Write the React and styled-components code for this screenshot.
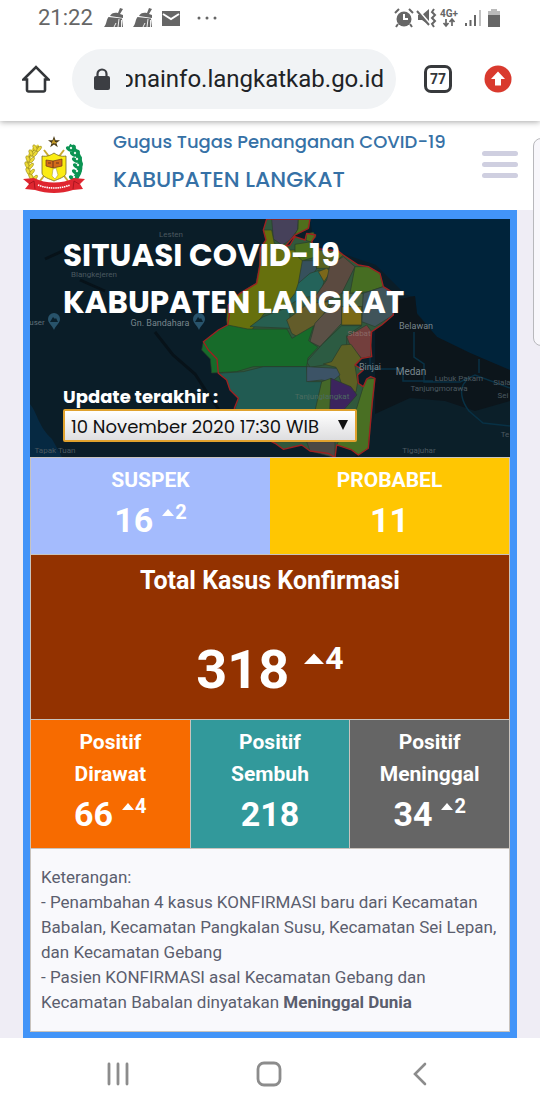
import React from "react";
import styled, { createGlobalStyle } from "styled-components";

const GlobalStyle = createGlobalStyle`
  * { box-sizing: border-box; }
  body { margin: 0; background: #fff; font-family: Roboto, "Liberation Sans", sans-serif; }
  h1, h2, p { margin: 0; }
  button { border: 0; padding: 0; background: none; font: inherit; color: inherit; }
  svg { display: block; }
`;

const display = `Poppins, Inter, "Open Sans", sans-serif`;

const Screen = styled.div`
  display: flex;
  flex-direction: column;
  min-height: 100vh;
  overflow: hidden;
`;

const StatusBar = styled.div`
  position: relative;
  z-index: 3;
  display: flex;
  justify-content: space-between;
  align-items: center;
  height: 36px;
  padding: 0 37px 0 38px;
  background: #fff;
  color: #666;
`;

const StatusGroup = styled.div`
  display: flex;
  align-items: center;
  gap: ${(p) => p.$gap}px;
`;

const Clock = styled.time`
  font-size: 22px;
  line-height: 36px;
  margin-right: 2px;
`;

const BrowserBar = styled.div`
  position: relative;
  z-index: 2;
  display: flex;
  align-items: center;
  height: 85px;
  padding: 0 28px 0 22px;
  box-shadow: 0 1px 6px rgba(0, 0, 0, 0.35);
  background: #fff;
  color: #333639;
`;

const AddressBox = styled.label`
  display: flex;
  align-items: center;
  flex: 1;
  min-width: 0;
  height: 60px;
  margin: 0 28px 0 22px;
  padding: 0 12px 0 21px;
  gap: 15px;
  border-radius: 30px;
  background: #f1f3f5;
`;

const Address = styled.input`
  flex: 1;
  min-width: 0;
  height: 40px;
  border: 0;
  padding: 0;
  background: none;
  outline: none;
  direction: rtl;
  font: 24px Roboto, sans-serif;
  color: #202225;
`;

const TabCount = styled.button`
  width: 28px;
  height: 28px;
  margin-right: 32px;
  border: 3px solid #37393c;
  border-radius: 7px;
  font-size: 14px;
  font-weight: 700;
  line-height: 22px;
`;

const Header = styled.header`
  display: flex;
  align-items: center;
  height: 89px;
  padding: 0 22px 2px;
  color: #3671a6;
  font-family: ${display};
`;

const Brand = styled.div`
  flex: 1;
  margin-left: 27px;
  padding-bottom: 8px;
  font-weight: 500;
  white-space: nowrap;
`;

const Agency = styled.p`
  font-size: 18px;
  line-height: 38px;
`;

const Region = styled.p`
  font-size: 22px;
  line-height: 38px;
`;

const MenuButton = styled.button`
  display: grid;
  gap: 6px;
  width: 36px;
`;

const MenuLine = styled.span`
  height: 5px;
  border-radius: 3px;
  background: #cfcfe0;
`;

const Main = styled.main`
  position: relative;
  flex: 1;
  padding: 0 23px;
  background: #efedf5;
`;

const SideTab = styled.aside`
  position: absolute;
  z-index: 1;
  top: -72px;
  right: -12px;
  width: 19px;
  height: 208px;
  border: 1px solid #b8b8bc;
  border-radius: 8px;
  background: #f8f7fb;
`;

const Frame = styled.section`
  padding: 9px 7px 6px;
  background: #4294f8;
`;

const Hero = styled.div`
  position: relative;
  padding: 13px 33px 15px;
  overflow: hidden;
  background: #0b1f2b;
  color: #fff;
  font-family: ${display};
`;

const MapArt = styled.svg`
  position: absolute;
  inset: 0;
  width: 100%;
  height: 100%;
`;

const HeroBody = styled.div`
  position: relative;
`;

const Title = styled.h1`
  font-size: 31px;
  font-weight: 700;
  line-height: 47px;
  white-space: nowrap;
`;

const UpdateLabel = styled.label`
  display: block;
  margin-top: 59px;
  font-size: 18px;
  font-weight: 700;
  line-height: 24px;
`;

const SelectWrap = styled.div`
  position: relative;
  width: 294px;
  max-width: 100%;
`;

const DateSelect = styled.select`
  display: block;
  width: 100%;
  height: 33px;
  padding: 2px 6px 0;
  appearance: none;
  border: 2px solid #e0a22e;
  border-radius: 2px;
  background: linear-gradient(#fff, #dedee0);
  color: #111;
  font: 18px ${display};
`;

const SelectArrow = styled.svg`
  position: absolute;
  right: 9px;
  top: 11px;
  pointer-events: none;
`;

const Board = styled.div`
  display: grid;
  gap: 1px;
  padding: 1px;
  background: #c9c3bd;
`;

const Row = styled.div`
  display: grid;
  grid-template-columns: repeat(${(p) => p.$columns}, 1fr);
  gap: ${(p) => p.$gap || 0}px;
`;

const Cell = styled.div`
  padding: ${(p) => (p.$large ? 8 : 6)}px 4px ${(p) => (p.$large ? 9 : 10)}px;
  background: ${(p) => p.$color};
  color: #fff;
  text-align: center;
  font-weight: 700;
`;

const CellLabel = styled.h2`
  font-size: ${(p) => (p.$large ? 25 : 21)}px;
  font-weight: 700;
  line-height: ${(p) => (p.$large ? 36 : 32)}px;
`;

const Figure = styled.div`
  display: flex;
  justify-content: center;
  gap: ${(p) => (p.$large ? 15 : 9)}px;
  margin-top: ${(p) => (p.$large ? 31 : 0)}px;
  font-size: ${(p) => (p.$large ? 54 : 34)}px;
  line-height: ${(p) => (p.$large ? 80 : 48)}px;
`;

const Rise = styled.sup`
  display: flex;
  align-items: center;
  gap: 1px;
  height: ${(p) => (p.$large ? 56 : 32)}px;
  font-size: ${(p) => (p.$large ? 32 : 20)}px;
`;

const Notes = styled.div`
  padding: 16px 9px 16px 10px;
  background: #f9f9fc;
  color: #5b5e6e;
  font-size: 17px;
  line-height: 25px;
`;

const SystemNav = styled.nav`
  display: flex;
  justify-content: space-between;
  align-items: center;
  height: 72px;
  padding: 0 108px 0 106px;
  color: #8c8c8c;
`;

function Broom() {
  return (
    <svg width="20" height="20" viewBox="0 0 20 20" fill="currentColor">
      <path d="M16 0l3 1-3 5 3 1v3L6 8c1-3 5-4 8-3z" />
      <path d="M4.500 9l13.500 1.500 1 8.500h-19c3-3 2-7 4.500-10z" />
      <path d="M15 11l-1 8M17.500 12v7M12 15l-2 4" stroke="#fff" strokeWidth=".9" />
    </svg>
  );
}

function StatusIcons() {
  return (
    <svg width="109" height="20" viewBox="0 0 109 20" fill="currentColor">
      <circle cx="10" cy="11" r="7.500" />
      <path d="M1 5l4-4M15 1l4 4M4 16l-2 3M16 16l2 3" stroke="currentColor" strokeWidth="2" />
      <path d="M10 6v5h4" stroke="#fff" strokeWidth="2" fill="none" />
      <path d="M24 7h4l7-6v16l-7-5h-4z" />
      <path d="M24 2l13 15" stroke="#fff" strokeWidth="2" />
      <path d="M23 3l12 14" stroke="currentColor" strokeWidth="2" />
      <path d="M40 1l-2 3 3 3-3 3 3 3-3 3 2 3" fill="none" stroke="currentColor" strokeWidth="2" />
      <text x="46" y="9" fontSize="10" fontWeight="700" fontFamily="Roboto">4G+</text>
      <path d="M52 11v6M49.500 15l2.500 3 2.500-3M58 18v-6M55.500 14l2.500-3 2.500 3" fill="none" stroke="currentColor" strokeWidth="1.700" />
      <path d="M71 15h2v3h-2zM75.500 12h2v6h-2zM80 7h2v11h-2z" />
      <path d="M85 2h2v16h-2z" opacity=".4" />
      <path d="M97 1h6v2h3v5H94V3h3z" opacity=".45" />
      <path d="M94 7h12v12H94z" />
    </svg>
  );
}

const wheat = [[15, 12], [11, 17], [8, 23], [7, 29], [8, 35], [11, 41]];
const cotton = [[48, 12], [52, 17], [54, 23], [55, 29], [54, 35], [51, 41]];

function Crest() {
  return (
    <svg width="64" height="58" viewBox="0 0 64 58" role="img" aria-label="Kabupaten Langkat">
      <path d="M32 0l1.500 4.200h4.500l-3.600 2.700 1.400 4.300-3.800-2.600-3.800 2.600 1.400-4.300L26 4.200h4.500z" fill="#4a3b16" />
      <path d="M32 3l1 3h2l-2 2-1-1-2 1v-2z" fill="#c59b29" />
      <path d="M17 10C3 18 3 36 13 45" fill="none" stroke="#e8d83a" strokeWidth="4" />
      <path d="M17 10C3 18 3 36 13 45" fill="none" stroke="#8c7e1e" strokeWidth=".8" />
      {wheat.map(([x, y]) => (
        <g key={y} fill="#edda35" stroke="#8c7e1e" strokeWidth=".5">
          <ellipse cx={x - 2} cy={y} rx="1.700" ry="3.500" transform={`rotate(-25 ${x - 2} ${y})`} />
          <ellipse cx={x + 2} cy={y + 1} rx="1.500" ry="3.500" transform={`rotate(40 ${x + 2} ${y + 1})`} />
        </g>
      ))}
      <path d="M47 10c14 8 14 26 4 35" fill="none" stroke="#0b9453" strokeWidth="5" />
      {cotton.map(([x, y]) => (
        <g key={y} fill="#0b9453">
          <ellipse cx={x + 3} cy={y} rx="2.500" ry="3.500" transform={`rotate(30 ${x + 3} ${y})`} />
          <ellipse cx={x - 1} cy={y + 1} rx="2" ry="3.500" transform={`rotate(-50 ${x - 1} ${y + 1})`} />
          <circle cx={x + 1} cy={y} r="1.200" fill="#e5f4ea" />
        </g>
      ))}
      <path d="M22 14l24 31M42 14L18 45" stroke="#c9ab31" strokeWidth="2" />
      <path d="M20 20c5 1 9-1 12-3 3 2 7 4 12 3v17c0 4-8 6-12 8-4-2-12-4-12-8z" fill="#fbec12" stroke="#756822" strokeWidth=".8" />
      <path d="M24 24l7 1 9-2v7l-9 2-7-2z" fill="#d36b19" stroke="#6c351c" strokeWidth=".7" />
      <path d="M31 25v7M26 27h3M34 27h3" stroke="#6c351c" />
      <path d="M31 33l3-1 2 7-3 4-3-3z" fill="#fff" stroke="#9a8d32" strokeWidth=".5" />
      <path d="M1 43l11-1c12 6 28 6 40 0l11 1-5 5 3 5-10 1c-12 4-26 4-38 0L3 53l4-5z" fill="#df2630" />
      <path d="M7 48l5-3 1 8M57 48l-5-3-1 8" fill="none" stroke="#9d111c" strokeWidth=".8" />
      <path d="M16 49c10 4 22 4 32 0" fill="none" stroke="#fff" strokeWidth="1.600" strokeDasharray="1.500 .7" />
    </svg>
  );
}

const border =
  "M215 12L205 45 213 75 196 100 195 150 185 205 135 235 100 270 103 300 98 330 70 345 25 380 40 405 66 432 70 475 95 495 105 525 130 550 118 580 150 640 240 685 265 703 320 690 345 708 400 715 420 728 425 690 470 705 490 720 520 700 532 560 540 490 527 485 515 492 505 515 490 505 488 480 505 465 480 450 500 430 530 425 527 390 530 350 560 330 595 300 598 235 565 215 555 175 520 155 490 150 445 120 430 108 360 100 350 80 362 60 335 55 330 75 300 65 285 90 270 95 300 60 340 40 345 12z";

const districts = [
  ["M230 12L310 12 308 45 285 75 262 90 235 72z", "#46415a"],
  ["M310 12h35l-3 28-45 22 12-20z", "#4f6f1c"],
  ["M335 56l20-4 8 14-15 15-15-5z", "#4f6f1c"],
  ["M205 45h25l8 40 35 20h50l8 40-8 60-15 20-20 40-80 30-45 60-65-10-3-30 3-45 35-35 50-30 10-55 2-50 17-25z", "#66700d"],
  ["M300 88l50-8 12 25 40 10-80 22-22-20z", "#4b701d"],
  ["M322 137h38l5 25-30 38-25 5z", "#36505c"],
  ["M310 205l35-30 30-10 15 25-15 50-60 10-75 50 40-40 20-25z", "#24635a"],
  ["M360 105l70 3 15 12-45 40-35 0z", "#58631f"],
  ["M370 170l25-10 12 10-20 30z", "#7b671a"],
  ["M405 150l40-25 35 30-40 80-60 30-20-20 35-50z", "#5b4a40"],
  ["M480 155l40 0 35 20 10 40-45 15-55 5z", "#466d22"],
  ["M440 235l65 0 0 40-65 0z", "#4a6440"],
  ["M505 235l60-20 33 20-3 65-55 35-40-15z", "#40545a"],
  ["M165 335l40-30 80-30 0 65z", "#275f50"],
  ["M275 315l65-50 65-5-30 60-60 50-25-15z", "#635c2a"],
  ["M345 380l15-55 60-65 20 15 0 50-65 70z", "#5b5046"],
  ["M440 275h60v55h-60z", "#7a6917"],
  ["M335 440l45-50 60-58h60l-45 30 0 25-50 60-60 10z", "#2c5b42"],
  ["M25 380L70 345 98 330l60 12h118l15 28 65-38-15 45 28 20-30 32-4 26-100 0-60 0-50 15-75 4-4-42-26-27z", "#176b2a"],
  ["M455 365l60-35 15 20-3 75-27 5-32-32z", "#733f3d"],
  ["M385 447l25-7 30-50 28-2 32 44-20 20 8 50-5 30-40-15-20-60z", "#5c6024"],
  ["M70 475l75-5 60-15h130l5 45h40l-20 180-220 0-20-100 10-30-25-25-10-30z", "#215b52"],
  ["M335 455l90 5 10 20-25 20-30-5-45 5z", "#3c5366"],
  ["M380 500l28-10 0 90 20 40-80 20z", "#456829"],
  ["M408 490l60 25 18 25-40 45h-42z", "#3c245e"],
  ["M505 515l10-23 25-2-20 210-30 20-20-15-45-15 60-110z", "#496f23"],
  ["M335 680h85v48l-75-20z", "#4c4944"],
];

const places = [
  [141, 18, 8, "Lesten"],
  [64, 58, 8, "Blangkejeren"],
  [130, 107, 9, "Gn. Bandahara"],
  [386, 110, 9, "Belawan"],
  [340, 151, 9, "Binjai"],
  [381, 156, 10, "Medan"],
  [429, 162, 8, "Lubuk Pakam"],
  [409, 172, 8, "Tanjungmorawa"],
  [472, 166, 8, "Siala"],
  [473, 179, 8, "Sei"],
  [475, 218, 8, "Te"],
  [389, 234, 8, "Tigajuhar"],
  [25, 234, 8, "Tapak Tuan"],
];

function RegionMap() {
  return (
    <MapArt viewBox="0 0 480 238" preserveAspectRatio="xMidYMid slice" aria-hidden="true">
      <path d="M0 0h480v238H0z" fill="#0a1d28" />
      <path d="M280 0h200v152l-40-18-33-16-20-24-2-16-9-2-30-30-62-21z" fill="#00233a" />
      <path d="M385 77l2 18 20 23 33 16 40 17v87H325l20-30V110l25-30z" fill="#0c151b" />
      <path d="M345 195l35-16 35 3 30 10 35-10v56H328z" fill="#0b1f29" />
      <path d="M0 185c8 10 8 22 22 35l10 18H0z" fill="#062942" />
      <path d="M125 113l18 23 22 19 13 20 14 20M15 40l22-10 20 3M50 61l25 11" fill="none" stroke="#071219" strokeWidth="3" />
      <path d="M384 113v25l10 7v18h36l15-7 35 13M340 124v26h33v12h30M436 162c-8 8-4 21 3 30l14 12 27 3M449 154v-14" fill="none" stroke="#083145" strokeWidth="1.500" />
      <g transform="translate(165 -4) scale(.3333)">
        <path d={border} fill="#31583c" />
        {districts.map(([d, fill]) => (
          <path key={d} d={d} fill={fill} stroke="#283b2b" strokeWidth="2" />
        ))}
        <path d={border} fill="none" stroke="#9f2021" strokeWidth="4" strokeLinejoin="round" />
      </g>
      {[24, 169].map((x) => (
        <g key={x} transform={`translate(${x} 101)`}>
          <path d="M0-7a6 6 0 0 0-6 6c0 4 4 6 6 11 2-5 6-7 6-11a6 6 0 0 0-6-6z" fill="#28536b" />
          <path d="M-4 2l3-5 2 2 1-1 2 4z" fill="#0a202c" />
        </g>
      ))}
      <g fontFamily="Roboto, sans-serif">
        {places.map(([x, y, size, name]) => (
          <text key={name} x={x} y={y} textAnchor="middle" fontSize={size} fill={size > 8 ? "#78868d" : "#4b5960"}>
            {name}
          </text>
        ))}
        <text x="7" y="106" textAnchor="middle" fontSize="8" fill="#607078">user</text>
        <text x="329" y="117" textAnchor="middle" fontSize="8" fill="#8a6865">Stabat</text>
        <text x="292" y="180" textAnchor="middle" fontSize="8" fill="#4c6b60">Tanjunglangkat</text>
      </g>
    </MapArt>
  );
}

function Stat({ label, value, rise, color, large }) {
  return (
    <Cell $color={color} $large={large}>
      {label.map((line) => (
        <CellLabel key={line} $large={large}>{line}</CellLabel>
      ))}
      <Figure $large={large}>
        <span>{value}</span>
        {rise && (
          <Rise $large={large}>
            <svg width={large ? 20 : 12} height={large ? 12 : 8} viewBox="0 0 12 8" fill="currentColor" preserveAspectRatio="none">
              <path d="M0 8L6 1l6 7z" />
            </svg>
            {rise}
          </Rise>
        )}
      </Figure>
    </Cell>
  );
}

export default function App() {
  return (
    <Screen>
      <GlobalStyle />
      <StatusBar>
        <StatusGroup $gap={9}>
          <Clock>21:22</Clock>
          <Broom />
          <Broom />
          <svg width="18" height="15" viewBox="0 0 18 15">
            <path d="M0 0h18v15H0z" fill="currentColor" />
            <path d="M1 3l8 5 8-5" fill="none" stroke="#fff" strokeWidth="2" />
          </svg>
          <svg width="36" height="4" viewBox="0 0 36 4" fill="currentColor">
            <circle cx="10" cy="2" r="1.500" />
            <circle cx="18" cy="2" r="1.500" />
            <circle cx="26" cy="2" r="1.500" />
          </svg>
        </StatusGroup>
        <StatusIcons />
      </StatusBar>

      <BrowserBar>
        <button aria-label="Home">
          <svg width="28" height="28" viewBox="0 0 28 28" fill="none" stroke="currentColor" strokeWidth="2.600">
            <path d="M1.500 14.500L14 2l12.500 12.500H23V25a1.500 1.500 0 0 1-1.500 1.500h-15A1.500 1.500 0 0 1 5 25V14.500z" />
          </svg>
        </button>
        <AddressBox>
          <svg width="18" height="22" viewBox="0 0 18 22">
            <path d="M4.500 9V6a4.500 4.500 0 0 1 9 0v3" fill="none" stroke="#3c3e43" strokeWidth="2.200" />
            <rect x="1" y="8" width="16" height="14" rx="2" fill="#3c3e43" />
          </svg>
          <Address aria-label="Address" readOnly value="onainfo.langkatkab.go.id" />
        </AddressBox>
        <TabCount aria-label="Open tabs">77</TabCount>
        <button aria-label="Update">
          <svg width="28" height="28" viewBox="0 0 28 28">
            <circle cx="14" cy="14" r="13.500" fill="#d93a2e" />
            <path d="M14 6.500l7 7.500h-4v6.500h-6V14H7z" fill="#fff" />
          </svg>
        </button>
      </BrowserBar>

      <Header>
        <Crest />
        <Brand>
          <Agency>Gugus Tugas Penanganan COVID-19</Agency>
          <Region>KABUPATEN LANGKAT</Region>
        </Brand>
        <MenuButton aria-label="Menu">
          <MenuLine />
          <MenuLine />
          <MenuLine />
        </MenuButton>
      </Header>

      <Main>
        <SideTab />
        <Frame>
          <Hero>
            <RegionMap />
            <HeroBody>
              <Title>SITUASI COVID-19<br />KABUPATEN LANGKAT</Title>
              <UpdateLabel htmlFor="update">Update terakhir :</UpdateLabel>
              <SelectWrap>
                <DateSelect id="update">
                  <option>10 November 2020 17:30 WIB</option>
                </DateSelect>
                <SelectArrow width="10" height="10" viewBox="0 0 10 10">
                  <path d="M0 0h10L5 10z" fill="#111" />
                </SelectArrow>
              </SelectWrap>
            </HeroBody>
          </Hero>
          <Board>
            <Row $columns={2}>
              <Stat label={["SUSPEK"]} value="16" rise="2" color="#a4bbfd" />
              <Stat label={["PROBABEL"]} value="11" color="#ffc602" />
            </Row>
            <Stat large label={["Total Kasus Konfirmasi"]} value="318" rise="4" color="#933200" />
            <Row $columns={3} $gap={1}>
              <Stat label={["Positif", "Dirawat"]} value="66" rise="4" color="#f76b00" />
              <Stat label={["Positif", "Sembuh"]} value="218" color="#32999b" />
              <Stat label={["Positif", "Meninggal"]} value="34" rise="2" color="#656565" />
            </Row>
            <Notes>
              <p>Keterangan:</p>
              <p>- Penambahan 4 kasus KONFIRMASI baru dari Kecamatan Babalan, Kecamatan Pangkalan Susu, Kecamatan Sei Lepan, dan Kecamatan Gebang</p>
              <p>- Pasien KONFIRMASI asal Kecamatan Gebang dan Kecamatan Babalan dinyatakan <b>Meninggal Dunia</b></p>
            </Notes>
          </Board>
        </Frame>
      </Main>

      <SystemNav>
        <button aria-label="Recent apps">
          <svg width="24" height="24" viewBox="0 0 24 24" stroke="currentColor" strokeWidth="2.800" strokeLinecap="round">
            <path d="M3 2v20M12 2v20M21 2v20" />
          </svg>
        </button>
        <button aria-label="Home screen">
          <svg width="26" height="26" viewBox="0 0 26 26" fill="none" stroke="currentColor" strokeWidth="2.800">
            <rect x="2" y="2" width="22" height="22" rx="6" />
          </svg>
        </button>
        <button aria-label="Back">
          <svg width="24" height="24" viewBox="0 0 24 24" fill="none" stroke="currentColor" strokeWidth="2.600" strokeLinecap="round">
            <path d="M17 2L7 12l10 10" />
          </svg>
        </button>
      </SystemNav>
    </Screen>
  );
}
